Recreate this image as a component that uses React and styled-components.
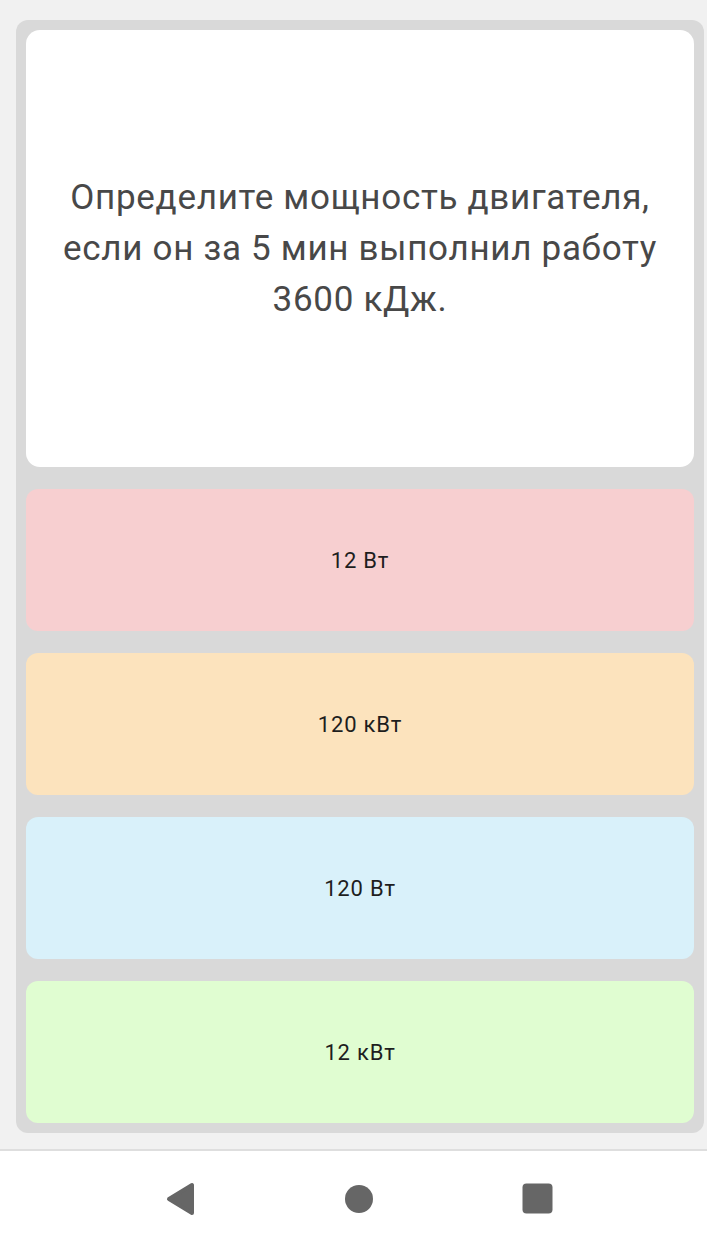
import styled, { createGlobalStyle } from "styled-components";

const GlobalStyle = createGlobalStyle`
  html, body {
    margin: 0;
    padding: 0;
    background: #f1f1f1;
    font-family: Roboto, "Noto Sans", "Liberation Sans", sans-serif;
  }
`;

const Page = styled.div`
  width: 707px;
  height: 1246px;
  display: flex;
  flex-direction: column;
  background: #f1f1f1;
`;

const Panel = styled.div`
  margin: 20px 3px 0 16px;
  padding: 10px;
  background: #d9d9d9;
  border-radius: 12px;
  display: flex;
  flex-direction: column;
  gap: 22px;
`;

const Question = styled.div`
  height: 437px;
  background: #ffffff;
  border-radius: 14px;
  display: flex;
  align-items: center;
  justify-content: center;
  text-align: center;
  padding: 0 30px;
  box-sizing: border-box;
  color: #484848;
  font-size: 35px;
  letter-spacing: 0.7px;
  line-height: 51px;
`;

const Answer = styled.div`
  height: 142px;
  background: ${(p) => p.$bg};
  border-radius: 12px;
  display: flex;
  align-items: center;
  justify-content: center;
  color: #1e1e1e;
  font-size: 22px;
  letter-spacing: 0.8px;
`;

const NavBar = styled.div`
  margin-top: 16px;
  flex: 1;
  background: #ffffff;
  border-top: 2px solid #dedede;
  display: flex;
  align-items: center;
  justify-content: space-between;
  padding: 0 154px 0 166px;
  box-sizing: border-box;
`;

const answers = [
  { text: "12 Вт", bg: "#f7cfd0" },
  { text: "120 кВт", bg: "#fce3bd" },
  { text: "120 Вт", bg: "#d9f1fa" },
  { text: "12 кВт", bg: "#e0fdd1" },
];

export default function App() {
  return (
    <Page>
      <GlobalStyle />
      <Panel>
        <Question>
          Определите мощность двигателя, если он за 5 мин выполнил работу
          3600 кДж.
        </Question>
        {answers.map((a) => (
          <Answer key={a.text} $bg={a.bg}>
            {a.text}
          </Answer>
        ))}
      </Panel>
      <NavBar>
        <svg width="30" height="34" viewBox="0 0 30 34">
          <path
            d="M3 17 L26 3 L26 31 Z"
            fill="#666"
            stroke="#666"
            strokeWidth="4"
            strokeLinejoin="round"
          />
        </svg>
        <svg width="30" height="30" viewBox="0 0 30 30">
          <circle cx="15" cy="15" r="14" fill="#666" />
        </svg>
        <svg width="31" height="31" viewBox="0 0 31 31">
          <rect x="0.5" y="0.5" width="30" height="30" rx="4" fill="#666" />
        </svg>
      </NavBar>
    </Page>
  );
}
